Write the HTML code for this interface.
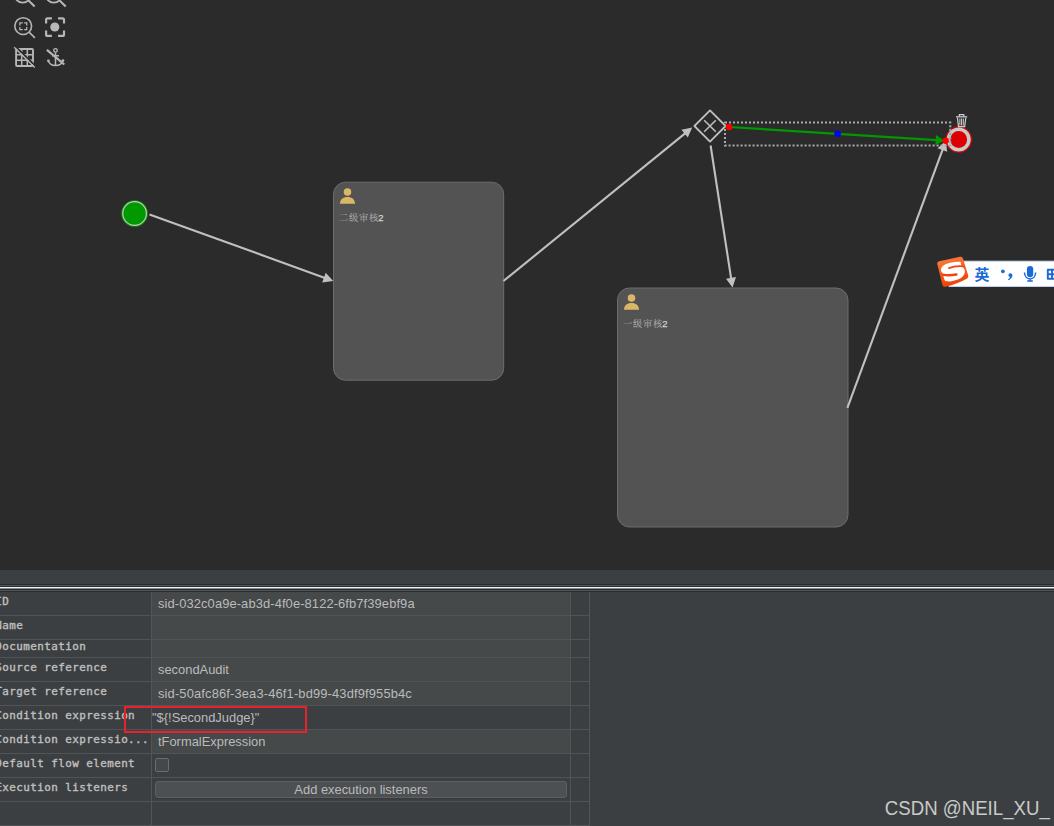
<!DOCTYPE html>
<html lang="zh">
<head>
<meta charset="utf-8">
<title>BPMN editor</title>
<style>
html,body{margin:0;padding:0;}
body{width:1054px;height:826px;overflow:hidden;background:#3c3f41;position:relative;font-family:"Liberation Sans","Noto Sans CJK SC",sans-serif;}
#canvas{position:absolute;left:0;top:0;width:1054px;height:570px;background:#2b2b2b;overflow:hidden;}
#canvas svg{position:absolute;left:0;top:0;}
#panel{position:absolute;left:0;top:570px;width:1054px;height:256px;background:#3c3f41;overflow:hidden;}
.split{position:absolute;left:0;width:1054px;}
.row{position:absolute;left:0;width:590px;border-bottom:1px solid #515456;box-sizing:border-box;}
.lab{position:absolute;left:-5px;top:0;width:157px;height:100%;box-sizing:border-box;border-right:1px solid #515456;
 font-family:"DejaVu Sans Mono","Liberation Mono",monospace;font-weight:normal;font-size:10.9px;letter-spacing:0.44px;color:#c0c0c0;white-space:nowrap;overflow:hidden;-webkit-text-stroke:0.35px #c0c0c0;}
.lab span{position:absolute;left:0.2px;top:2.6px;line-height:14px;}
.val{position:absolute;left:152px;top:0;width:419px;height:100%;box-sizing:border-box;border-right:1px solid #515456;
 font-size:12.9px;color:#bbbbbb;white-space:nowrap;}
.val.lt{background:#45494a;}
.val span{position:absolute;left:6px;top:5px;line-height:14px;}
.ext{position:absolute;left:571px;top:0;width:19px;height:100%;box-sizing:border-box;border-right:1px solid #515456;}
.wm{position:absolute;left:884.8px;top:798.5px;font-size:18.65px;line-height:20px;color:#c9caca;transform:scaleY(1.055);transform-origin:0 16.4px;white-space:nowrap;}
</style>
</head>
<body>
<div id="canvas">
<svg width="1054" height="570" viewBox="0 0 1054 570">
 <!-- toolbar icons -->
 <g fill="none" stroke="#b6b6b6" stroke-width="1.9" stroke-linecap="butt">
  <circle cx="22.7" cy="-5.3" r="8" stroke-width="1.8"/><path d="M28.6 0.6 L34.6 6.6" stroke-width="2.1"/>
  <circle cx="53.8" cy="-5.3" r="8" stroke-width="1.8"/><path d="M59.7 0.6 L65.7 6.6" stroke-width="2.1"/>
  <circle cx="23.2" cy="26.1" r="8.4" stroke-width="1.6"/><path d="M29.3 32.4 L34.9 37.8" stroke-width="1.6"/>
  <path d="M19.85 25.5 V22.75 H22.8 M24.2 22.75 H26.75 V25.5 M26.75 26.9 V29.5 H24.2 M22.8 29.5 H19.85 V26.9" stroke-width="1.25"/>
  <path d="M46.1 23.6 V19.8 Q46.1 18.3 47.6 18.3 H51.9 M58 18.3 H62.5 Q64 18.3 64 19.8 V23.6 M64 30.4 V34.4 Q64 35.9 62.5 35.9 H58 M51.9 35.9 H47.6 Q46.1 35.9 46.1 34.4 V30.4" stroke-width="2.2"/>
  <circle cx="54.8" cy="27" r="4.55" fill="#b9b9b9" stroke="none"/>
  <rect x="16.1" y="49" width="16.9" height="17" rx="1" stroke-width="1.9"/>
  <path d="M21.7 49 V66 M27.3 49 V66 M16 54.7 H33 M16 60.3 H33" stroke-width="1.55"/>
  <path d="M15.6 46.6 L35.6 66.2" stroke="#2b2b2b" stroke-width="1.8"/>
  <path d="M14.2 47.3 L34.8 67.5" stroke-width="1.4"/>
 </g>
 <g fill="none" stroke="#b6b6b6" stroke-width="1.5">
  <circle cx="55.5" cy="50.4" r="1.75" stroke-width="1.4"/>
  <path d="M55.5 52.6 V65.8 M52 55.8 H59"/>
  <path d="M48.4 61 C49.5 64.2 52.2 65.5 55.5 65.5 C58.8 65.5 61.8 64.2 62.9 60.8" stroke-width="1.5"/>
  <circle cx="48.4" cy="60.8" r="1.4" fill="#b6b6b6" stroke="none"/>
  <circle cx="62.9" cy="60.6" r="1.4" fill="#b6b6b6" stroke="none"/>
  <path d="M46.9 49.8 L64.3 64.5" stroke-width="2.2"/>
 </g>

 <!-- start event -->
 <circle cx="134.6" cy="213.5" r="13.3" fill="#009900"/>
 <circle cx="134.6" cy="213.5" r="11.8" fill="none" stroke="#c6c6c6" stroke-width="1.2"/>

 <!-- tasks -->
 <rect x="333.5" y="182.2" width="170.2" height="198" rx="12" ry="12" fill="#535353" stroke="#6d6d6d" stroke-width="1"/>
 <rect x="617.5" y="288" width="230.5" height="239" rx="12" ry="12" fill="#535353" stroke="#6d6d6d" stroke-width="1"/>
 <g fill="#d9b766">
  <circle cx="347.5" cy="192" r="3.8"/><path d="M340 203.8 C340 199.5 343 197 347.5 197 C352 197 355 199.5 355 203.8 Z"/>
  <circle cx="631.5" cy="298" r="3.8"/><path d="M624 309.8 C624 305.5 627 303 631.5 303 C636 303 639 305.5 639 309.8 Z"/>
 </g>
 <text x="338.9" y="221.4" font-family="'Liberation Sans','Noto Serif CJK SC',serif" font-size="9.3" letter-spacing="0.7" fill="#b8b8b8">二级审核<tspan dx="-0.7" font-size="9.5" letter-spacing="0" fill="#d2d2d2" stroke="#d2d2d2" stroke-width="0.25">2</tspan></text>
 <text x="622.9" y="327.4" font-family="'Liberation Sans','Noto Serif CJK SC',serif" font-size="9.3" letter-spacing="0.7" fill="#b8b8b8">一级审核<tspan dx="-0.7" font-size="9.5" letter-spacing="0" fill="#d2d2d2" stroke="#d2d2d2" stroke-width="0.25">2</tspan></text>

 <!-- flows -->
 <g>
  <path d="M149.5 214.4 L324.9 277.9" stroke="#c0c0c0" stroke-width="2.1" fill="none"/><path d="M333.2 280.9 L322.2 282.4 L325.7 272.8 Z" fill="#c0c0c0"/>
  <path d="M503.5 281.0 L685.4 133.1" stroke="#c0c0c0" stroke-width="2.1" fill="none"/><path d="M692.2 127.5 L687.8 137.6 L681.4 129.7 Z" fill="#c0c0c0"/>
  <path d="M710.6 145.5 L731.2 278.9" stroke="#c0c0c0" stroke-width="2.1" fill="none"/><path d="M732.5 287.6 L726.0 278.7 L736.0 277.1 Z" fill="#c0c0c0"/>
  <path d="M847.4 407.9 L942.8 149.1" stroke="#c0c0c0" stroke-width="2.1" fill="none"/><path d="M945.8 140.8 L947.2 151.8 L937.6 148.2 Z" fill="#c0c0c0"/>
 </g>

 <!-- gateway -->
 <path d="M694.4 126 L710 110.4 L725.6 126 L710 141.6 Z" fill="#2b2b2b" stroke="#c0c0c0" stroke-width="1.8" stroke-linejoin="round"/>
 <path d="M704.2 120.2 L715.8 131.8 M715.8 120.2 L704.2 131.8" stroke="#c0c0c0" stroke-width="1.5" fill="none"/>

 <!-- end event -->
 <circle cx="958.7" cy="139.5" r="12.6" fill="#c6cccc" stroke="#dd0000" stroke-width="1.2"/>
 <circle cx="958.7" cy="139.5" r="8.4" fill="#dd0000"/>

 <!-- selection box -->
 <rect x="725" y="122.5" width="225.3" height="23" fill="none" stroke="#ababab" stroke-width="2" stroke-dasharray="2 2"/>
 <path d="M950.3 128.8 V146" fill="none" stroke="#98a4a4" stroke-width="1.6" stroke-dasharray="2 2"/>

 <!-- selected flow -->
 <g>
  <path d="M729.0 127.0 L936.7 140.1" stroke="#009900" stroke-width="2.2" fill="none"/><path d="M944.2 140.6 L935.4 145.2 L936.0 135.0 Z" fill="#009900"/>
 </g>
 <circle cx="729.1" cy="127" r="3.2" fill="#ff0000"/>
 <circle cx="837.6" cy="133.8" r="3.3" fill="#0000ff"/>
 <circle cx="945.7" cy="140.7" r="3.2" fill="#ff0000"/>

 <!-- trash -->
 <g fill="none" stroke="#cfcfcf" stroke-width="1.2">
  <path d="M956 116.8 H967.2"/><path d="M959.4 116.5 V114.6 H963.8 V116.5"/>
  <path d="M957.4 117.5 L958.5 126.6 H964.7 L965.8 117.5"/>
  <path d="M959.9 118.5 V125.5 M961.6 118.5 V125.5 M963.3 118.5 V125.5" stroke-width="1"/>
 </g>

 <!-- IME toolbar -->
 <defs><linearGradient id="sg" x1="0" y1="0" x2="0.25" y2="1"><stop offset="0" stop-color="#fa7a3c"/><stop offset="1" stop-color="#ee470b"/></linearGradient></defs>
 <rect x="949" y="261.2" width="116" height="25.2" fill="#ffffff" stroke="#c9dcf5" stroke-width="1"/>
 <path d="M939.8 263.8 L960.6 259.3 L965.8 276.3 Q957 281.5 944.8 284.2 Z" fill="url(#sg)" stroke="url(#sg)" stroke-width="5" stroke-linejoin="round"/>
 <path d="M960.6 261.9 C957.5 261.7 954.5 261.9 951.4 262.4 C948.5 262.9 946 263.8 944.1 265.1 C942.3 266.4 941.1 267.9 941 269.4 C940.9 270.8 941.5 272 942.4 272.8 L943.9 278.1 C944.2 279.2 944.6 280.2 945.1 281 C947.2 281.5 949.3 281.6 951.4 281.3 C954.2 280.9 956.8 280.2 959.1 279.1 C961.2 278 962.9 276.5 963.9 274.7 C964.6 273.6 964.9 272.5 964.9 271.4 C964.9 270.2 964.4 269 963.5 268 C962.6 267 961.6 265.8 961 264.6 Z" fill="#ffffff"/>
 <path d="M949 268.1 C953 266.3 958 265.9 963.6 266.3" fill="none" stroke="#f2450c" stroke-width="1.7" stroke-linecap="round"/>
 <path d="M942.6 274.6 C947 275.5 952 275.3 956.4 274.5" fill="none" stroke="#f2450c" stroke-width="2.4" stroke-linecap="round"/>
 <text x="974.5" y="279.6" font-family="'Liberation Sans','Noto Sans CJK SC',sans-serif" font-weight="bold" font-size="15" fill="#1a6ad8">英</text>
 <circle cx="1002.9" cy="271.3" r="1.9" fill="#1a6ad8"/>
 <path d="M1008.4 275.2 A1.95 1.95 0 1 1 1012.4 275.2 C1012.4 277.2 1011 279 1008.6 280.2 L1007.9 279.4 C1009.2 278.6 1009.9 277.8 1010 277 A1.95 1.95 0 0 1 1008.4 275.2 Z" fill="#1a6ad8"/>
 <rect x="1026.9" y="266" width="6.3" height="11.2" rx="3.15" fill="#1a6ad8"/>
 <path d="M1024.5 272.6 C1024.5 281 1035.6 281 1035.6 272.6 M1030 278.9 V281 M1027.2 281.1 H1032.8" fill="none" stroke="#1a6ad8" stroke-width="1.5"/>
 <path d="M1047.8 269.8 H1056 V278.7 H1047.8 Z M1047.8 274.2 H1056 M1052 269.8 V278.7" fill="none" stroke="#1a6ad8" stroke-width="1.9" stroke-linejoin="round"/>
</svg>
</div>

<div id="panel">
 <div class="split" style="top:14px;height:1px;background:#292b2c"></div>
 <div class="split" style="top:15px;height:1px;background:#4f5355"></div>
 <div class="split" style="top:16px;height:1px;background:#2d2f30"></div>
 <div class="split" style="top:17px;height:1px;background:#f0f1f2"></div>
 <div class="split" style="top:18px;height:1px;background:#7d8c98"></div>
 <div class="split" style="top:19px;height:1px;background:#2a2c2d"></div>
 <div class="split" style="top:20px;height:1px;background:#4f5355"></div>
 <div class="split" style="top:21px;height:1px;background:#2b2d2e"></div>

 <div class="row" style="top:22px;height:24px"><div class="lab"><span>ID</span></div><div class="val lt"><span style="letter-spacing:0.11px">sid-032c0a9e-ab3d-4f0e-8122-6fb7f39ebf9a</span></div><div class="ext"></div></div>
 <div class="row" style="top:46px;height:24px"><div class="lab"><span>Name</span></div><div class="val lt"></div><div class="ext"></div></div>
 <div class="row" style="top:70px;height:18px"><div class="lab"><span style="top:0">Documentation</span></div><div class="val lt"></div><div class="ext"></div></div>
 <div class="row" style="top:88px;height:24px"><div class="lab"><span>Source reference</span></div><div class="val lt"><span>secondAudit</span></div><div class="ext"></div></div>
 <div class="row" style="top:112px;height:24px"><div class="lab"><span>Target reference</span></div><div class="val lt"><span style="letter-spacing:0.15px">sid-50afc86f-3ea3-46f1-bd99-43df9f955b4c</span></div><div class="ext"></div></div>
 <div class="row" style="top:136px;height:24px"><div class="lab"><span>Condition expression</span></div><div class="val"><span style="left:0px">"${!SecondJudge}"</span></div><div class="ext"></div></div>
 <div class="row" style="top:160px;height:24px"><div class="lab"><span>Condition expressio...</span></div><div class="val lt"><span>tFormalExpression</span></div><div class="ext"></div></div>
 <div class="row" style="top:184px;height:24px"><div class="lab"><span>Default flow element</span></div><div class="val"><div style="position:absolute;left:3px;top:4px;width:12px;height:12px;border:1px solid #6b6b6b;border-radius:2px;background:#43494a"></div></div><div class="ext"></div></div>
 <div class="row" style="top:208px;height:24px"><div class="lab"><span>Execution listeners</span></div><div class="val"><div style="position:absolute;left:3px;top:3px;width:410px;height:15px;border:1px solid #5e6060;border-radius:3px;background:#4c5052;box-shadow:0 1px 0 #383b3d;text-align:center;line-height:15px;font-size:12.9px;color:#bbbbbb">Add execution listeners</div></div><div class="ext"></div></div>
 <div class="row" style="top:232px;height:24px"><div class="lab"></div><div class="val"></div><div class="ext"></div></div>

 <div style="position:absolute;left:123.5px;top:136.3px;width:183.5px;height:27px;border:2px solid #e8222d;box-sizing:border-box"></div>
</div>
<div class="wm">CSDN @NEIL_XU_</div>
</body>
</html>
